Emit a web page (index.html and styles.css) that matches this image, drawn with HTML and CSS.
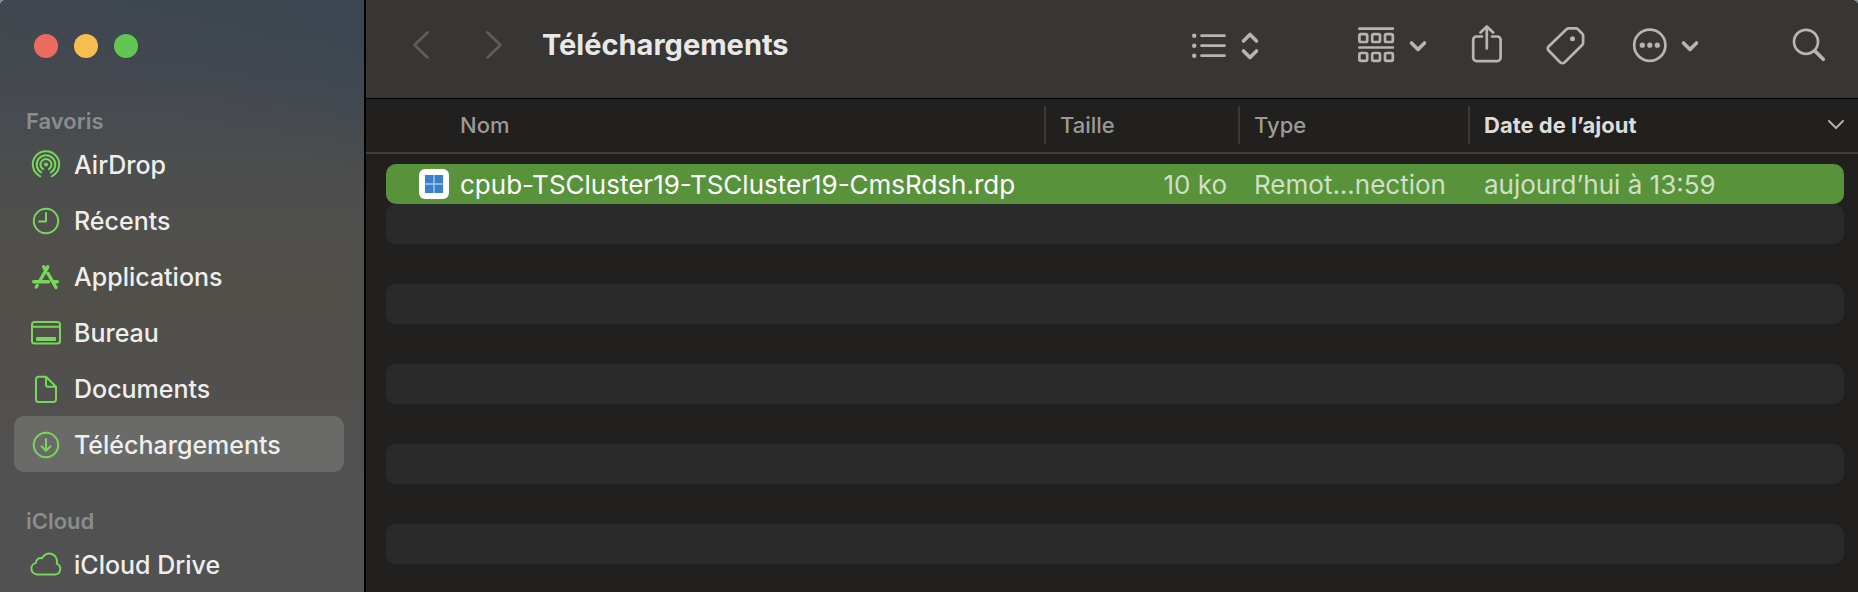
FILE: index.html
```html
<!DOCTYPE html>
<html lang="fr">
<head>
<meta charset="utf-8">
<meta name="viewport" content="width=device-width, initial-scale=1">
<title>Téléchargements</title>
<link rel="stylesheet" href="styles.css">
</head>
<body>
<div class="window">
  <aside class="sidebar">
    <div class="lights">
      <button class="light light-close" aria-label="Fermer"></button>
      <button class="light light-min" aria-label="Réduire"></button>
      <button class="light light-zoom" aria-label="Agrandir"></button>
    </div>
    <nav class="group">
      <h2 class="group-title">Favoris</h2>
      <a class="item" href="#">
        <svg class="item-icon" viewBox="0 0 32 32" aria-hidden="true"><circle class="solid" cx="16" cy="16.500" r="2"/><path d="M13 21.100a5.500 5.500 0 1 1 6 0M11.200 24.500a9.300 9.300 0 1 1 9.600 0M10.200 28.300a13.200 13.200 0 1 1 11.600 0"/></svg>
        <span>AirDrop</span>
      </a>
      <a class="item" href="#">
        <svg class="item-icon" viewBox="0 0 32 32" aria-hidden="true"><circle cx="16" cy="17" r="12.200"/><path d="M16 9v8.500H9"/></svg>
        <span>Récents</span>
      </a>
      <a class="item" href="#">
        <svg class="item-icon thick" viewBox="0 0 32 32" aria-hidden="true"><path d="M17.800 6.800 9.800 21M13.700 6.800l1.500 2.700M18 13.500l8 14M3.700 21.700H18.500M23.500 21.700h3.800M7.200 25.500 6.300 27"/></svg>
        <span>Applications</span>
      </a>
      <a class="item" href="#">
        <svg class="item-icon" viewBox="0 0 32 32" aria-hidden="true"><rect x="2" y="6" width="28" height="21.500" rx="2.500"/><path d="M2 10.700h28"/><rect class="solid" x="6" y="21" width="20" height="4" rx="1"/></svg>
        <span>Bureau</span>
      </a>
      <a class="item" href="#">
        <svg class="item-icon" viewBox="0 0 32 32" aria-hidden="true"><path d="M16 4.800H8.500a2.500 2.500 0 0 0-2.500 2.500V27.500a2.500 2.500 0 0 0 2.500 2.500h15a2.500 2.500 0 0 0 2.500-2.500V14.800zM16 4.800v8a2 2 0 0 0 2 2h8"/></svg>
        <span>Documents</span>
      </a>
      <a class="item item-active" href="#" aria-current="page">
        <svg class="item-icon" viewBox="0 0 32 32" aria-hidden="true"><circle cx="16" cy="17" r="12.200"/><path d="M16 11v11.500M11.500 18.200l4.500 4.500 4.500-4.500"/></svg>
        <span>Téléchargements</span>
      </a>
    </nav>
    <nav class="group">
      <h2 class="group-title">iCloud</h2>
      <a class="item" href="#">
        <svg class="item-icon" viewBox="0 0 32 32" aria-hidden="true"><path d="M7 26.500a5.900 5.900 0 0 1-1.200-11.600a5 5 0 0 1 6.300-4.700a7.800 7.800 0 0 1 14.600 5.400a5.700 5.700 0 0 1-1.200 10.900z"/></svg>
        <span>iCloud Drive</span>
      </a>
    </nav>
  </aside>

  <main class="main">
    <header class="toolbar">
      <div class="history">
        <button class="tool" aria-label="Précédent"><svg width="20" height="40" viewBox="0 0 20 40"><path d="M16.500 7.500 3.500 20l13 12.500"/></svg></button>
        <button class="tool" aria-label="Suivant"><svg width="20" height="40" viewBox="0 0 20 40"><path d="M3.500 7.500 16.500 20l-13 12.500"/></svg></button>
      </div>
      <h1 class="title">Téléchargements</h1>
      <div class="tools">
        <button class="tool tool-view" aria-label="Présentation par liste"><svg width="70" height="40" viewBox="0 0 70 40"><path d="M11.500 10.700h23M11.500 20.700h23M11.500 30.700h23"/><g class="solid"><circle cx="4.200" cy="10.700" r="2.200"/><circle cx="4.200" cy="20.700" r="2.200"/><circle cx="4.200" cy="30.700" r="2.200"/></g><path class="bold" d="m53.500 16 6.500-6.500 6.500 6.500M53.500 26l6.500 6.500 6.500-6.500"/></svg></button>
        <button class="tool" aria-label="Grouper"><svg width="70" height="40" viewBox="0 0 70 40"><path d="M1.400 3.700h33.500M1.400 22.500h33.500"/><rect x="1.400" y="9.200" width="7.800" height="7.800" rx="1.500"/><rect x="14.200" y="9.200" width="7.800" height="7.800" rx="1.500"/><rect x="27" y="9.200" width="7.800" height="7.800" rx="1.500"/><rect x="1.400" y="28" width="7.800" height="7.800" rx="1.500"/><rect x="14.200" y="28" width="7.800" height="7.800" rx="1.500"/><rect x="27" y="28" width="7.800" height="7.800" rx="1.500"/><path class="bold" d="m53.500 18 6.500 6.500 6.500-6.500"/></svg></button>
        <button class="tool" aria-label="Partager"><svg width="34" height="40" viewBox="0 0 34 40"><path d="M12 11.500H6.500a3.300 3.300 0 0 0-3.300 3.300v18a3.300 3.300 0 0 0 3.300 3.300h20.800a3.300 3.300 0 0 0 3.300-3.300v-18a3.300 3.300 0 0 0-3.300-3.300H22M16.800 23.500V2M10.500 7.500l6.300-6 6.300 6"/></svg></button>
        <button class="tool" aria-label="Tags"><svg width="42" height="40" viewBox="0 0 42 40"><path d="M20.500 4.300 2.600 21.500a2.800 2.800 0 0 0 0 4l11.500 11.700a3.300 3.300 0 0 0 4.600 0L36.200 20a3 3 0 0 0 .9-2.200V10.500a2.500 2.500 0 0 0-.8-1.800l-4.500-4.600a2.500 2.500 0 0 0-1.800-.7h-7.400a3 3 0 0 0-2.100.9z"/><circle class="solid" cx="26.500" cy="13.700" r="2.500"/></svg></button>
        <button class="tool" aria-label="Plus d’actions"><svg width="70" height="40" viewBox="0 0 70 40"><circle cx="19.800" cy="20.200" r="15.600"/><g class="solid"><circle cx="12.300" cy="20.200" r="2.600"/><circle cx="19.800" cy="20.200" r="2.600"/><circle cx="27.300" cy="20.200" r="2.600"/></g><path class="bold" d="m53.500 18 6.500 6.500 6.500-6.500"/></svg></button>
        <button class="tool tool-search" aria-label="Rechercher"><svg width="34" height="40" viewBox="0 0 34 40"><circle cx="14" cy="16.800" r="12"/><path class="bold" d="m23 26 8.300 8.300"/></svg></button>
      </div>
    </header>

    <section class="files">
      <table class="table">
        <colgroup><col><col class="col-size"><col class="col-type"><col class="col-date"></colgroup>
        <thead>
          <tr>
            <th scope="col"><span class="head head-name">Nom</span></th>
            <th scope="col"><span class="head">Taille</span></th>
            <th scope="col"><span class="head">Type</span></th>
            <th scope="col" aria-sort="descending"><span class="head head-sorted">Date de l’ajout<svg class="sort" viewBox="0 0 16 10" aria-hidden="true"><path d="m1 1 7 7 7-7"/></svg></span></th>
          </tr>
        </thead>
        <tbody>
          <tr class="selected">
            <td><span class="file"><svg class="file-icon" viewBox="0 0 30 30" aria-hidden="true"><rect width="30" height="30" rx="6" fill="#fff"/><path fill="#a5c8ec" d="M6 6h18v18H6z"/><path fill="#3b80c8" d="M6 6h8.300v8.300H6zM15.700 6H24v8.300h-8.300zM6 15.700h8.300V24H6zM15.700 15.700H24V24h-8.300z"/></svg><span class="file-name">cpub-TSCluster19-TSCluster19-CmsRdsh.rdp</span></span></td>
            <td class="size">10 ko</td>
            <td class="meta">Remot...nection</td>
            <td class="meta">aujourd’hui à 13:59</td>
          </tr>
          <tr class="stripe"><td colspan="4"></td></tr>
          <tr><td colspan="4"></td></tr>
          <tr class="stripe"><td colspan="4"></td></tr>
          <tr><td colspan="4"></td></tr>
          <tr class="stripe"><td colspan="4"></td></tr>
          <tr><td colspan="4"></td></tr>
          <tr class="stripe"><td colspan="4"></td></tr>
          <tr><td colspan="4"></td></tr>
          <tr class="stripe"><td colspan="4"></td></tr>
        </tbody>
      </table>
    </section>
  </main>
</div>
</body>
</html>
```
FILE: styles.css
```css
* { box-sizing: border-box; }

body {
  margin: 0;
  background: #8b9096;
  font-family: Inter, "Liberation Sans", sans-serif;
  font-size: 25px;
  color: #efeeed;
}

button {
  padding: 0;
  border: 0;
  background: none;
  color: inherit;
}

.window {
  display: flex;
  height: 100vh;
  overflow: hidden;
  border-radius: 6px 6px 0 0;
  background: #21201e;
}

/* Sidebar */
.sidebar {
  flex: none;
  width: 366px;
  padding: 34px 20px 0 14px;
  border-right: 2px solid #000;
  background:
    linear-gradient(200deg, rgba(48, 68, 86, 0.4), rgba(64, 72, 84, 0) 170px),
    linear-gradient(#42474d 0, #454950 80px, #4b4d4e 160px, #504f4c 230px, #514f4a 300px, #51504e 400px, #515151 470px);
}

.lights {
  display: flex;
  gap: 16px;
  padding: 0 20px;
  margin-bottom: 46px;
}

.light {
  width: 24px;
  height: 24px;
  border-radius: 50%;
}

.light-close { background: #ed6a5f; }
.light-min { background: #f5bf4f; }
.light-zoom { background: #62c655; }

.group { margin-bottom: 32px; }

.group-title {
  height: 32px;
  margin: 0;
  padding: 1px 0 0 12px;
  font-size: 22px;
  font-weight: 600;
  line-height: 32px;
  color: #8a8c8e;
}

.item {
  display: flex;
  align-items: center;
  gap: 12px;
  height: 56px;
  padding: 0 16px;
  border-radius: 10px;
  color: inherit;
  text-decoration: none;
  font-weight: 500;
}

.item span { padding-top: 2px; }

.item-active { background: #6a6a69; }

.item-icon {
  flex: none;
  width: 32px;
  height: 32px;
  fill: none;
  stroke: #79d65c;
  stroke-width: 2;
  stroke-linecap: round;
  stroke-linejoin: round;
}

.item-icon.thick { stroke-width: 3.4; }

.item-icon .solid {
  fill: #79d65c;
  stroke: none;
}

/* Toolbar */
.main {
  flex: 1;
  min-width: 0;
}

.toolbar {
  display: flex;
  align-items: center;
  padding: 25px 32px 33px 45px;
  border-bottom: 1px solid #000;
  background: #383634;
}

.history {
  display: flex;
  gap: 53px;
  margin-right: 38px;
  color: #5f5d5b;
}

.title {
  margin: 0;
  font-size: 29px;
  font-weight: 700;
  line-height: 40px;
  color: #e9e8e7;
}

.tools {
  display: flex;
  gap: 42px;
  margin-left: auto;
  color: #b7b5b3;
}

.tool svg {
  display: block;
  fill: none;
  stroke: currentColor;
  stroke-width: 2.7;
  stroke-linecap: round;
  stroke-linejoin: round;
}

.tool .bold { stroke-width: 3.6; }

.tool .solid {
  fill: currentColor;
  stroke: none;
}

.tool-view { margin-right: 56px; }
.tool-search { margin-left: 50px; }

/* File list */
.files {
  padding: 0 14px 0 20px;
  background: linear-gradient(#3f3e3d, #3f3e3d) 0 53px / 100% 2px no-repeat;
}

.table {
  width: 100%;
  table-layout: fixed;
  border-spacing: 0;
}

.col-size { width: 194px; }
.col-type { width: 230px; }
.col-date { width: 376px; }

th {
  padding: 7px 0 20px;
  font-size: 22px;
  font-weight: 500;
  text-align: left;
  color: #9b9a99;
}

.head {
  display: flex;
  align-items: center;
  justify-content: space-between;
  padding-left: 14px;
  border-left: 2px solid #3a3938;
  line-height: 38px;
}

.head-name {
  padding-left: 74px;
  border-left: 0;
}

.head-sorted {
  font-weight: 700;
  color: #dddcdb;
}

.sort {
  width: 16px;
  height: 10px;
  fill: none;
  stroke: #b0afae;
  stroke-width: 2;
  stroke-linecap: round;
}

td {
  height: 40px;
  padding: 0;
  font-size: 26px;
  line-height: 32px;
  white-space: nowrap;
}

td:first-child { border-radius: 10px 0 0 10px; }
td:last-child { border-radius: 0 10px 10px 0; }
td[colspan] { border-radius: 10px; }

.selected td { background: #58923b; }
.stripe td { background: #2a2a2a; }

.file {
  display: flex;
  align-items: center;
  gap: 11px;
  padding-left: 33px;
  color: #fff;
}

.file-icon {
  flex: none;
  width: 30px;
  height: 30px;
}

.file-name { padding-top: 2px; }

.size {
  padding: 2px 11px 0 0;
  text-align: right;
  color: #cfe0c5;
}

.meta {
  padding: 2px 0 0 16px;
  color: #cfe0c5;
}
```
